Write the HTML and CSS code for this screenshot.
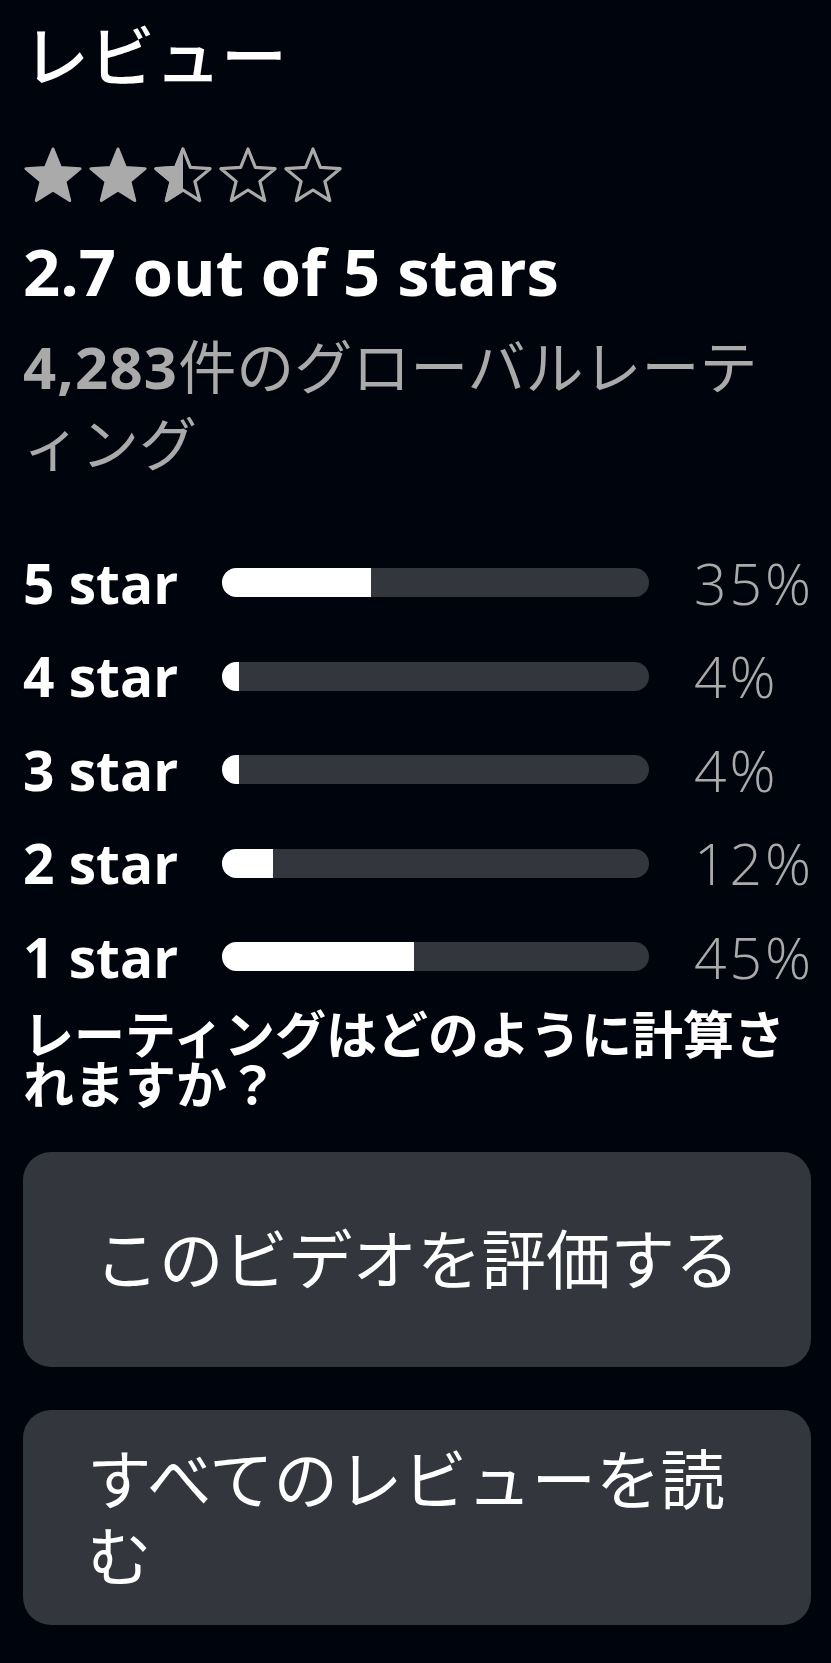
FILE: index.html
```html
<!DOCTYPE html>
<html lang="ja">
<head>
<meta charset="utf-8">
<title>レビュー</title>
<link rel="stylesheet" href="styles.css">
</head>
<body>
<main class="page">
  <h1 class="title">レビュー</h1>
  <div class="stars" aria-label="2.7 out of 5 stars">
    <svg class="star" viewBox="0 0 60 57" width="60" height="57"><polygon class="star-full" points="30,2 37.35,20.39 57.1,21.7 41.89,34.36 46.75,53.56 30,43 13.25,53.56 18.11,34.36 2.9,21.7 22.65,20.39"/></svg>
    <svg class="star" viewBox="0 0 60 57" width="60" height="57"><polygon class="star-full" points="30,2 37.35,20.39 57.1,21.7 41.89,34.36 46.75,53.56 30,43 13.25,53.56 18.11,34.36 2.9,21.7 22.65,20.39"/></svg>
    <svg class="star" viewBox="0 0 60 57" width="60" height="57">
      <defs><clipPath id="half-clip"><rect x="0" y="0" width="30" height="57"/></clipPath></defs>
      <polygon class="star-full" clip-path="url(#half-clip)" points="30,2 37.35,20.39 57.1,21.7 41.89,34.36 46.75,53.56 30,43 13.25,53.56 18.11,34.36 2.9,21.7 22.65,20.39"/>
      <polygon class="star-empty" points="30,2 37.35,20.39 57.1,21.7 41.89,34.36 46.75,53.56 30,43 13.25,53.56 18.11,34.36 2.9,21.7 22.65,20.39"/>
    </svg>
    <svg class="star" viewBox="0 0 60 57" width="60" height="57"><polygon class="star-empty" points="30,2 37.35,20.39 57.1,21.7 41.89,34.36 46.75,53.56 30,43 13.25,53.56 18.11,34.36 2.9,21.7 22.65,20.39"/></svg>
    <svg class="star" viewBox="0 0 60 57" width="60" height="57"><polygon class="star-empty" points="30,2 37.35,20.39 57.1,21.7 41.89,34.36 46.75,53.56 30,43 13.25,53.56 18.11,34.36 2.9,21.7 22.65,20.39"/></svg>
  </div>
  <p class="avg">2.7 out of 5 stars</p>
  <p class="count"><b>4,283</b>件のグローバルレーティング</p>
  <div class="hist">
    <div class="row"><span class="label">5 star</span><div class="track"><div class="fill" style="width:35%"></div></div><span class="pct">35%</span></div>
    <div class="row"><span class="label">4 star</span><div class="track"><div class="fill" style="width:4%"></div></div><span class="pct">4%</span></div>
    <div class="row"><span class="label">3 star</span><div class="track"><div class="fill" style="width:4%"></div></div><span class="pct">4%</span></div>
    <div class="row"><span class="label">2 star</span><div class="track"><div class="fill" style="width:12%"></div></div><span class="pct">12%</span></div>
    <div class="row"><span class="label">1 star</span><div class="track"><div class="fill" style="width:45%"></div></div><span class="pct">45%</span></div>
  </div>
  <p class="question">レーティングはどのように計算されますか？</p>
  <a class="btn btn-rate" href="#"><span class="btn-text">このビデオを評価する</span></a>
  <a class="btn btn-all" href="#"><span class="btn-text">すべてのレビューを読む</span></a>
</main>
</body>
</html>
```

FILE: styles.css
```css
html, body {
  margin: 0;
  padding: 0;
  background: #00050d;
}

body {
  font-family: "Open Sans", "Noto Sans CJK JP", sans-serif;
  color: #ffffff;
  line-break: normal;
}

.page {
  padding: 15px 20px 38px 23px;
  display: flex;
  flex-direction: column;
}

.title {
  margin: 0;
  font-size: 66px;
  line-height: 80px;
  font-weight: 500;
}

.stars {
  margin-top: 52px;
  display: flex;
  gap: 5px;
  height: 57px;
}

.star {
  display: block;
  flex: none;
}

.star-full {
  fill: #aaaaaa;
  stroke: #aaaaaa;
  stroke-width: 3;
  stroke-linejoin: round;
}

.star-empty {
  fill: none;
  stroke: #aaaaaa;
  stroke-width: 3.2;
  stroke-linejoin: round;
}

.avg {
  margin: 27px 0 0;
  font-size: 65px;
  line-height: 80px;
  font-weight: 700;
}

.count {
  margin: 17px 0 0;
  padding-right: 8px;
  font-size: 58px;
  line-height: 77px;
  color: #aaaaaa;
}

.count b {
  font-weight: 700;
  letter-spacing: 1.2px;
}

.hist {
  margin-top: 54px;
  display: flex;
  flex-direction: column;
}

.row {
  height: 93.5px;
  display: grid;
  grid-template-columns: 154px 427px 1fr;
  column-gap: 45px;
  align-items: center;
}

.label {
  font-size: 55px;
  line-height: 60px;
  font-weight: 700;
  white-space: nowrap;
}

.track {
  height: 29px;
  border-radius: 14.5px;
  background: #33373d;
  overflow: hidden;
}

.fill {
  height: 100%;
  background: #ffffff;
}

.pct {
  font-size: 57px;
  line-height: 60px;
  font-weight: 300;
  letter-spacing: 3px;
  color: #aaaaaa;
  white-space: nowrap;
}

.question {
  margin: 5px 0 0;
  font-size: 51px;
  line-height: 50px;
  font-weight: 700;
}

.btn {
  box-sizing: border-box;
  height: 215px;
  padding: 0 64px;
  border-radius: 28px;
  background: #33373d;
  color: #ffffff;
  text-decoration: none;
  display: flex;
  align-items: center;
  justify-content: center;
}

.btn-rate {
  margin-top: 43.5px;
}

.btn-all {
  margin-top: 43px;
}

.btn-text {
  font-size: 64.5px;
  line-height: 77px;
  font-weight: 400;
  text-align: left;
}
```
